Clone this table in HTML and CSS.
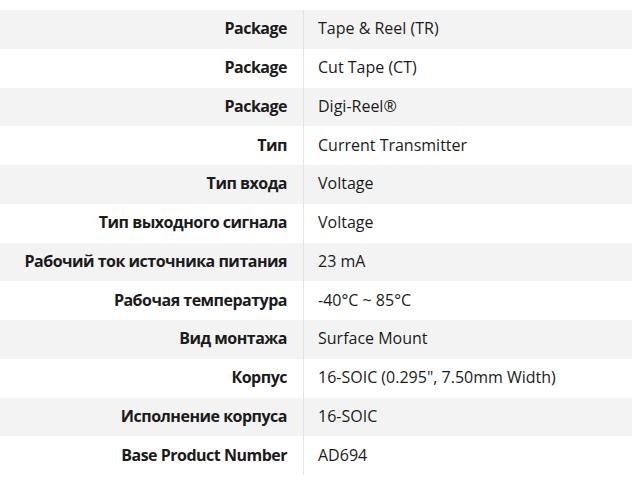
FILE: index.html
```html
<!DOCTYPE html>
<html lang="ru">
<head>
<meta charset="utf-8">
<link rel="stylesheet" href="styles.css">
</head>
<body>
<div class="specs">
  <div class="row"><div class="label">Package</div><div class="value">Tape &amp; Reel (TR)</div></div>
  <div class="row"><div class="label">Package</div><div class="value">Cut Tape (CT)</div></div>
  <div class="row"><div class="label">Package</div><div class="value">Digi-Reel®</div></div>
  <div class="row"><div class="label">Тип</div><div class="value">Current Transmitter</div></div>
  <div class="row"><div class="label">Тип входа</div><div class="value">Voltage</div></div>
  <div class="row"><div class="label">Тип выходного сигнала</div><div class="value">Voltage</div></div>
  <div class="row"><div class="label">Рабочий ток источника питания</div><div class="value">23 mA</div></div>
  <div class="row"><div class="label">Рабочая температура</div><div class="value">-40°C ~ 85°C</div></div>
  <div class="row"><div class="label">Вид монтажа</div><div class="value">Surface Mount</div></div>
  <div class="row"><div class="label">Корпус</div><div class="value">16-SOIC (0.295", 7.50mm Width)</div></div>
  <div class="row"><div class="label">Исполнение корпуса</div><div class="value">16-SOIC</div></div>
  <div class="row"><div class="label">Base Product Number</div><div class="value">AD694</div></div>
</div>
</body>
</html>
```
FILE: styles.css
```css
html, body {
  margin: 0;
  padding: 0;
  background: #ffffff;
}
body {
  padding-top: 10px;
  font-family: "Open Sans", "Noto Sans", sans-serif;
  font-size: 16px;
  color: #1b1b1b;
}
.specs {
  display: flex;
  flex-direction: column;
}
.row {
  display: grid;
  grid-template-columns: 304px 1fr;
  height: 38.75px;
  align-items: stretch;
}
.row:nth-child(odd) {
  background: #f3f3f3;
}
.label {
  font-weight: 700;
  letter-spacing: -0.5px;
  text-align: right;
  padding-right: 16px;
  padding-bottom: 2px;
  border-right: 1px solid #e3e3e3;
  display: flex;
  align-items: center;
  justify-content: flex-end;
  white-space: nowrap;
}
.value {
  padding-left: 14px;
  padding-bottom: 2px;
  display: flex;
  align-items: center;
  white-space: nowrap;
}
```
